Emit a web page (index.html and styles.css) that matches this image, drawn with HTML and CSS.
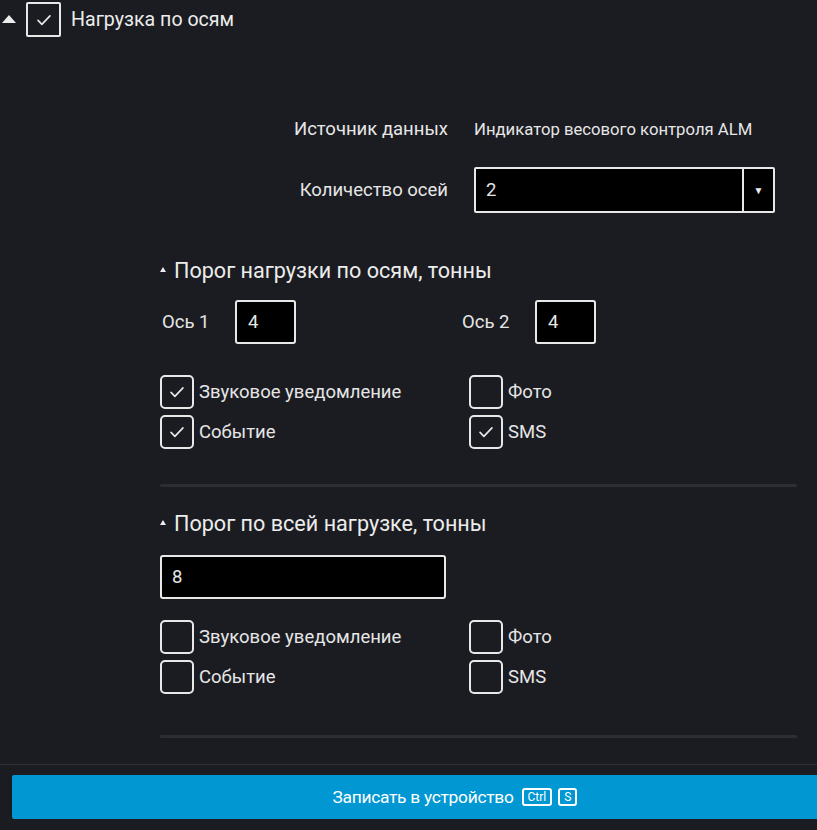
FILE: index.html
```html
<!DOCTYPE html>
<html lang="ru">
<head>
<meta charset="utf-8">
<link rel="stylesheet" href="styles.css">
</head>
<body>
<div class="page">
  <div class="head">
    <span class="tri-big"></span>
    <span class="cb-head"><svg viewBox="0 0 24 24" width="22" height="22"><path d="M5.5 12.5l4.2 4.2 8.8-9.2" fill="none" stroke="#e8e8e8" stroke-width="1.8" stroke-linecap="round" stroke-linejoin="round"/></svg></span>
    <span class="head-title">Нагрузка по осям</span>
  </div>

  <div class="form">
    <div class="frow row-source">
      <div class="flabel">Источник данных</div>
      <div class="fvalue">Индикатор весового контроля ALM</div>
    </div>
    <div class="frow row-axes">
      <div class="flabel">Количество осей</div>
      <div class="select"><span class="select-val">2</span><span class="select-btn">&#9660;</span></div>
    </div>
  </div>

  <div class="section sec-first">
    <div class="sec-head"><span class="tri-small"></span>Порог нагрузки по осям, тонны</div>
    <div class="axes">
      <div class="axis"><span class="axis-label">Ось 1</span><div class="num">4</div></div>
      <div class="axis"><span class="axis-label">Ось 2</span><div class="num">4</div></div>
    </div>
    <div class="checks">
      <label class="chk"><span class="box"><svg viewBox="0 0 24 24" width="22" height="22"><path d="M5.5 12.5l4.2 4.2 8.8-9.2" fill="none" stroke="#e8e8e8" stroke-width="1.8" stroke-linecap="round" stroke-linejoin="round"/></svg></span>Звуковое уведомление</label>
      <label class="chk"><span class="box"></span>Фото</label>
      <label class="chk"><span class="box"><svg viewBox="0 0 24 24" width="22" height="22"><path d="M5.5 12.5l4.2 4.2 8.8-9.2" fill="none" stroke="#e8e8e8" stroke-width="1.8" stroke-linecap="round" stroke-linejoin="round"/></svg></span>Событие</label>
      <label class="chk"><span class="box"><svg viewBox="0 0 24 24" width="22" height="22"><path d="M5.5 12.5l4.2 4.2 8.8-9.2" fill="none" stroke="#e8e8e8" stroke-width="1.8" stroke-linecap="round" stroke-linejoin="round"/></svg></span>SMS</label>
    </div>
    <div class="divider"></div>
  </div>

  <div class="section sec-second">
    <div class="sec-head"><span class="tri-small"></span>Порог по всей нагрузке, тонны</div>
    <div class="wide-input">8</div>
    <div class="checks">
      <label class="chk"><span class="box"></span>Звуковое уведомление</label>
      <label class="chk"><span class="box"></span>Фото</label>
      <label class="chk"><span class="box"></span>Событие</label>
      <label class="chk"><span class="box"></span>SMS</label>
    </div>
    <div class="divider divider-last"></div>
  </div>
</div>

<div class="footer">
  <button class="save">Записать в устройство <kbd>Ctrl</kbd><kbd>S</kbd></button>
</div>
</body>
</html>
```

FILE: styles.css
```css
html, body {
  margin: 0;
  padding: 0;
  background: #1b1c21;
  overflow: hidden;
}
body {
  font-family: Roboto, "Liberation Sans", sans-serif;
  color: #e6e6e6;
  width: 817px;
  height: 830px;
}
.page {
  padding-top: 2px;
}
.head {
  display: flex;
  align-items: center;
  height: 35px;
}
.tri-big {
  width: 0;
  height: 0;
  margin-left: 2px;
  border-left: 7px solid transparent;
  border-right: 7px solid transparent;
  border-bottom: 8px solid #ececec;
  margin-top: -2px;
}
.cb-head {
  width: 31px;
  height: 31px;
  border: 2px solid #e8e8e8;
  border-radius: 2px;
  margin-left: 10px;
  display: flex;
  align-items: center;
  justify-content: center;
}
.head-title {
  font-size: 19.6px;
  margin-left: 10px;
  color: #ececec;
}

.form {
  display: flex;
  flex-direction: column;
}
.frow {
  display: grid;
  grid-template-columns: 448px auto;
  column-gap: 26px;
  align-items: center;
}
.row-source {
  margin-top: 81px;
  height: 20px;
}
.row-axes {
  margin-top: 29px;
}
.flabel {
  text-align: right;
  font-size: 18.5px;
  color: #e6e6e6;
}
.fvalue {
  font-size: 16.7px;
  color: #e6e6e6;
}
.select {
  width: 297px;
  height: 42px;
  border: 2px solid #e8e8e8;
  border-radius: 2px;
  background: #000;
  display: flex;
  align-items: stretch;
}
.select-val {
  flex: 1;
  display: flex;
  align-items: center;
  padding-left: 10px;
  font-size: 18.5px;
}
.select-btn {
  width: 29px;
  border-left: 2px solid #e8e8e8;
  display: flex;
  align-items: center;
  justify-content: center;
  font-size: 10px;
  color: #ececec;
}

.section {
  margin-left: 160px;
  width: 637px;
}
.sec-first {
  margin-top: 45px;
}
.sec-second {
  margin-top: 24px;
}
.sec-head {
  display: flex;
  align-items: center;
  height: 24px;
  font-size: 21.6px;
  color: #ececec;
}
.tri-small {
  width: 0;
  height: 0;
  border-left: 3px solid transparent;
  border-right: 3px solid transparent;
  border-bottom: 5px solid #ececec;
  margin-right: 8px;
  margin-top: -1px;
}
.axes {
  display: grid;
  grid-template-columns: 300px 300px;
  margin-top: 18px;
}
.axis {
  display: flex;
  align-items: center;
}
.axis-label {
  width: 75px;
  padding-left: 2px;
  box-sizing: border-box;
  font-size: 18.5px;
}
.num {
  height: 40px;
  border: 2px solid #e8e8e8;
  border-radius: 3px;
  background: #000;
  display: flex;
  align-items: center;
  padding-left: 11px;
  width: 46px;
  font-size: 18.5px;
}
.wide-input {
  width: 272px;
  height: 40px;
  border: 2px solid #e8e8e8;
  border-radius: 3px;
  background: #000;
  display: flex;
  align-items: center;
  padding-left: 10px;
  margin-top: 20px;
  font-size: 18.5px;
}
.checks {
  display: grid;
  grid-template-columns: 309px auto;
  row-gap: 6px;
  margin-top: 31px;
}
.sec-second .checks {
  margin-top: 21px;
}
.chk {
  display: flex;
  align-items: center;
  font-size: 18.5px;
  color: #e6e6e6;
}
.box {
  width: 30px;
  height: 30px;
  border: 2px solid #e8e8e8;
  border-radius: 5px;
  display: flex;
  align-items: center;
  justify-content: center;
  margin-right: 5px;
}
.divider {
  height: 3px;
  background: #2d2e33;
  border-radius: 2px;
  margin-top: 35px;
}
.divider-last {
  margin-top: 41px;
}

.footer {
  position: absolute;
  left: 0;
  top: 764px;
  width: 817px;
  height: 66px;
  border-top: 1px solid #303136;
  box-sizing: border-box;
  padding-top: 10px;
  padding-left: 12px;
  overflow: hidden;
}
.save {
  width: 886px;
  height: 44px;
  border: none;
  border-radius: 2px;
  background: #0097d2;
  color: #fff;
  font-family: Roboto, "Liberation Sans", sans-serif;
  font-size: 17.4px;
  display: flex;
  align-items: center;
  justify-content: center;
  padding: 0;
  letter-spacing: -0.3px;
}
.save kbd {
  font-family: Roboto, "Liberation Sans", sans-serif;
  font-size: 12px;
  border: 2px solid #fff;
  border-radius: 3px;
  height: 14px;
  line-height: 14px;
  padding: 0 4px;
  margin-left: 6px;
  letter-spacing: 0;
}
.save kbd:first-child {
  margin-left: 8px;
}
```
